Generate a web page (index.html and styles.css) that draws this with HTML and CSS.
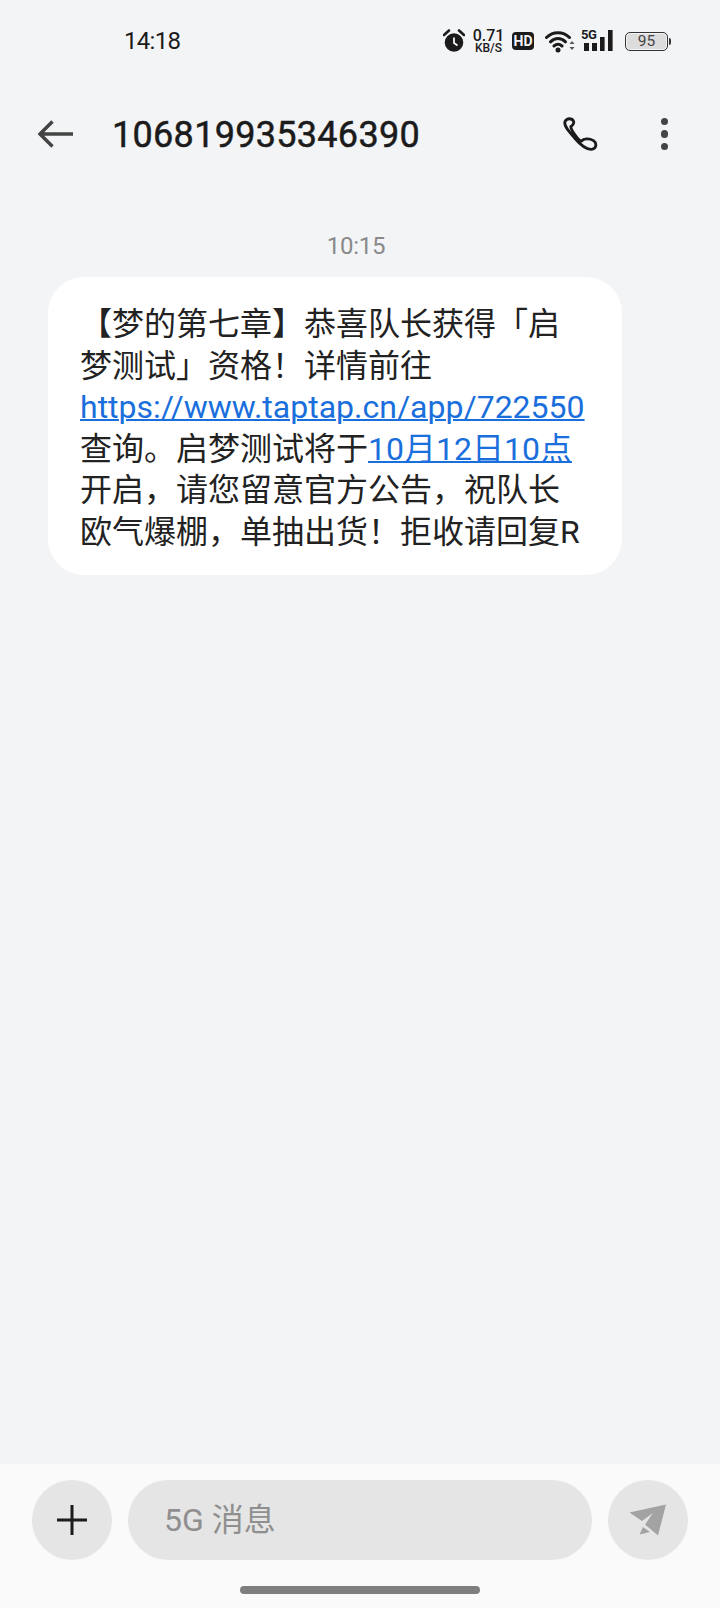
FILE: index.html
```html
<!DOCTYPE html>
<html lang="zh-CN">
<head>
<meta charset="utf-8">
<title>106819935346390</title>
<link rel="stylesheet" href="styles.css">
</head>
<body>
<div class="app">
  <div class="status">
    <span class="clock">14:18</span>
    <div class="status-icons">
      <svg class="i-alarm" width="22" height="24" viewBox="0 0 22 24"><circle cx="11" cy="13.5" r="9.3" fill="#1b1b1b"/><path d="M1 6 L6 1.5 M21 6 L16 1.5" stroke="#1b1b1b" stroke-width="2.6" stroke-linecap="round" fill="none"/><path d="M11 8.5 V14 L14.5 16.5" stroke="#f3f4f6" stroke-width="1.8" fill="none"/></svg>
      <div class="speed"><span class="speed-num">0.71</span><span class="speed-unit">KB/S</span></div>
      <span class="hd">HD</span>
      <svg class="i-wifi" width="30" height="24" viewBox="0 0 30 24"><path d="M1.5 8.5 C8 2 18 2 24.5 8.5 M5.5 12.8 C10 8.5 16 8.5 20.5 12.8 M9 17 C11.5 14.8 14.5 14.8 17 17" stroke="#1b1b1b" stroke-width="3" fill="none" stroke-linecap="round"/><circle cx="13" cy="21" r="2.5" fill="#1b1b1b"/><path d="M24.5 15 L27 12 L29.5 15 Z" fill="#555"/><path d="M24.5 18 L27 21 L29.5 18 Z" fill="#555"/></svg>
      <div class="signal">
        <span class="five-g">5G</span>
        <svg class="bars" width="30" height="22" viewBox="0 0 30 22"><rect x="1" y="13" width="5" height="8" fill="#1b1b1b"/><rect x="9" y="13" width="5" height="8" fill="#1b1b1b"/><rect x="17" y="7" width="4.6" height="14" fill="#1b1b1b"/><rect x="25" y="0" width="4.6" height="21" fill="#1b1b1b"/></svg>
      </div>
      <div class="battery"><div class="battery-body">95</div><div class="battery-cap"></div></div>
    </div>
  </div>

  <header class="bar">
    <svg class="back" width="36" height="28" viewBox="0 0 36 28"><path d="M14.5 1.5 L2 14 L14.5 26.5 M2 14 H35" stroke="#444" stroke-width="3.4" fill="none"/></svg>
    <h1 class="title">106819935346390</h1>
    <svg class="phone" width="36" height="34" viewBox="0 0 36 34"><path d="M3 4.5 C5 0.8 10 1 11.5 4.2 C12.5 6.5 10 9 8.8 9.6 C8.6 12 15.5 23 19.5 24.2 C21.5 21.6 27 21 31.5 23.6 C35 26 34.5 31 30.5 32.2 C26 33 19 28.5 13 21.5 C7 14.5 1.5 9 3 4.5 Z" stroke="#1b1b1b" stroke-width="2.8" fill="none" stroke-linejoin="round"/></svg>
    <div class="dots"><i></i><i></i><i></i></div>
  </header>

  <main class="thread">
    <div class="stamp">10:15</div>
    <div class="bubble">【梦的第七章】恭喜队长获得「启梦测试」资格！详情前往 <a class="link">https://www.taptap.cn/app/722550</a> 查询。启梦测试将于<a class="link">10月12日10点</a>开启，请您留意官方公告，祝队长欧气爆棚，单抽出货！拒收请回复R</div>
  </main>

  <footer class="composer">
    <div class="row">
      <div class="round">
        <svg width="32" height="32" viewBox="0 0 32 32"><path d="M16 1 V31 M1 16 H31" stroke="#1b1b1b" stroke-width="3" fill="none"/></svg>
      </div>
      <div class="input">5G 消息</div>
      <div class="round">
        <svg width="38" height="32" viewBox="0 0 38 32"><path d="M37 0.5 L0.5 8.5 L13 17 L24 9 L16 20.5 L29 31.5 Z" fill="#a3a3a3"/><path d="M14 23 L21 28 L10.5 30.5 Z" fill="#a3a3a3"/></svg>
      </div>
    </div>
    <div class="home"></div>
  </footer>
</div>
</body>
</html>
```
FILE: styles.css
```css
* { box-sizing: border-box; }
html, body { margin: 0; padding: 0; }
body {
  width: 720px;
  height: 1608px;
  background: #f3f4f6;
  font-family: Roboto, "Noto Sans CJK SC", sans-serif;
  color: #1b1b1b;
  overflow: hidden;
}
.app { display: flex; flex-direction: column; height: 1608px; }

/* status bar */
.status {
  height: 82px;
  display: flex;
  align-items: center;
  justify-content: space-between;
  padding: 0 49px 0 124px;
}
.clock { font-size: 24px; font-weight: 400; letter-spacing: -0.7px; }
.status-icons { display: flex; align-items: center; }
.i-alarm { margin-right: 8px; }
.speed { display: flex; flex-direction: column; width: 31px; margin-right: 8px; align-items: center; }
.speed-num { font-size: 16px; font-weight: 500; line-height: 14px; }
.speed-unit { font-size: 12px; font-weight: 500; line-height: 11px; }
.hd {
  width: 22px;
  height: 18px;
  background: #1b1b1b;
  color: #f3f4f6;
  border-radius: 4px;
  font-size: 14px;
  font-weight: 700;
  line-height: 18px;
  text-align: center;
  margin-right: 11px;
}
.i-wifi { margin-right: 8px; }
.signal { display: flex; align-items: flex-end; width: 31px; height: 24px; margin-right: 11px; }
.bars { display: block; margin-left: -31px; margin-bottom: 1px; }
.five-g {
  font-size: 13px;
  font-weight: 700;
  line-height: 12px;
  width: 16px;
  margin-left: -2px;
  align-self: flex-start;
  margin-right: 17px;
  letter-spacing: -0.4px;
}
.battery { display: flex; align-items: center; }
.battery-body {
  width: 43px;
  height: 19px;
  border: 1.5px solid #333;
  border-radius: 5px;
  background: #dcdcdc;
  box-shadow: inset 0 0 0 1px #f3f4f6;
  color: #444;
  font-size: 15.5px;
  line-height: 16px;
  text-align: center;
}
.battery-cap { width: 2px; height: 7px; background: #333; border-radius: 0 2px 2px 0; margin-left: 1px; }

/* header */
.bar {
  height: 104px;
  display: flex;
  align-items: center;
  padding: 0 52px 0 38px;
}
.back { flex: none; margin-right: 38px; }
.title {
  margin: 0;
  padding-top: 2px;
  flex: 1;
  font-size: 36px;
  font-weight: 400;
  line-height: 44px;
  letter-spacing: 0.3px;
  -webkit-text-stroke: 0.5px #1b1b1b;
}
.phone { flex: none; margin-right: 63px; }
.dots { display: flex; flex-direction: column; gap: 5px; }
.dots i { display: block; width: 7.5px; height: 7.5px; border-radius: 50%; background: #444; }

/* thread */
.thread { flex: 1; display: flex; flex-direction: column; padding: 0 98px 0 48px; }
.stamp {
  margin-top: 46px;
  margin-right: -42px;
  text-align: center;
  font-size: 24px;
  line-height: 28px;
  color: #8a8a8a;
  letter-spacing: -0.3px;
}
.bubble {
  margin-top: 17px;
  width: 574px;
  background: #fff;
  border-radius: 36px;
  padding: 27px 32px 21px 32px;
  font-size: 32px;
  line-height: 41.6px;
  color: #222;
  font-weight: 400;
}
.link { color: #1a6fdc; text-decoration: underline; text-decoration-thickness: 2px; }

/* composer */
.composer { height: 144px; background: #fafafa; padding-top: 16px; display: flex; flex-direction: column; }
.row { display: flex; gap: 16px; padding: 0 32px; height: 80px; }
.round {
  flex: none;
  width: 80px;
  height: 80px;
  border-radius: 50%;
  background: #e5e5e5;
  display: flex;
  align-items: center;
  justify-content: center;
}
.input {
  flex: 1;
  height: 80px;
  border-radius: 40px;
  background: #e5e5e5;
  padding-left: 36px;
  font-size: 32px;
  line-height: 80px;
  color: #8f8f8f;
}
.home { width: 240px; height: 8px; border-radius: 4px; background: #7f7f7f; margin: 26px auto 0; }
```
